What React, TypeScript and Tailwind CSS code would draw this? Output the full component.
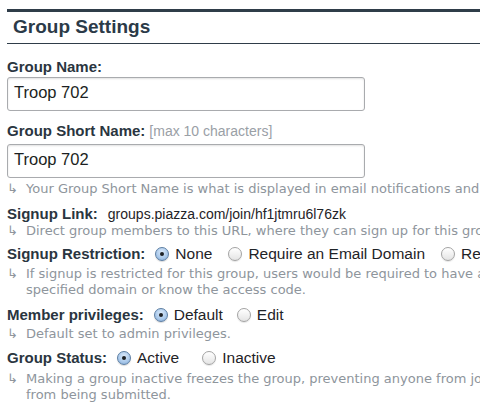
import React from 'react';

// Group settings panel — label / field / hint rows, cropped on the right like the original page.

const LABEL = 'font-["Liberation_Sans",Arial,sans-serif] font-bold text-[15px] leading-[18px] text-[#2a3540]';
const HINT = 'font-["DejaVu_Sans",Verdana,sans-serif] text-[13px] leading-[16px] text-[#8e959c] whitespace-nowrap';
const OPTION = 'font-["Liberation_Sans",Arial,sans-serif] text-[15.5px] leading-[18px] text-[#1f2327]';

function Radio({ checked }: { checked?: boolean }) {
  return checked ? (
    <span className="flex-none w-[14px] h-[14px] rounded-full border border-[#5c7ea3] bg-[radial-gradient(circle_at_50%_35%,#dbeafa_0%,#a9c8ea_60%,#7ea6d2_100%)] flex items-center justify-center shadow-[0_1px_1px_rgba(0,0,0,0.15)]">
      <span className="w-[4px] h-[4px] rounded-full bg-[#1d2125]" />
    </span>
  ) : (
    <span className="flex-none w-[14px] h-[14px] rounded-full border border-[#a3a3a3] bg-[linear-gradient(#ffffff,#e4e4e4)] shadow-[0_1px_1px_rgba(0,0,0,0.1)]" />
  );
}

function Option({ checked, label, className = '' }: { checked?: boolean; label: string; className?: string }) {
  return (
    <span className={'flex items-center gap-[6px] ' + className}>
      <Radio checked={checked} />
      <span className={OPTION}>{label}</span>
    </span>
  );
}

function Hint({ lines, className = '' }: { lines: string[]; className?: string }) {
  return (
    <div className={HINT + ' ' + className}>
      {lines.map((l, i) => (
        <div key={i} className={i === 0 ? 'flex' : 'pl-[19px]'}>
          {i === 0 ? <span className="inline-block flex-none w-[19px]">↳</span> : null}
          <span>{l}</span>
        </div>
      ))}
    </div>
  );
}

function TextBox({ value }: { value: string }) {
  return (
    <div className="w-[358px] h-[34px] rounded-[3px] border border-[#a9abae] bg-white shadow-[inset_0_1px_2px_rgba(0,0,0,0.12)] flex items-center pl-[6px] pb-[3px]">
      <span className='font-["Liberation_Sans",Arial,sans-serif] text-[16.5px] text-[#1c1f22]'>{value}</span>
    </div>
  );
}

export default function App() {
  return (
    <div className="w-[480px] h-[407px] overflow-hidden bg-white">
      <div className="w-[760px] pl-[7px] pt-[9px]">
        {/* heading */}
        <div className="h-[3px] bg-[#2f3d49]" />
        <div className="h-[32px] flex items-center pl-[6px] border-b border-[#2f3d49]">
          <span className='font-["Liberation_Sans",Arial,sans-serif] font-bold text-[19px] text-[#2b3a48]'>Group Settings</span>
        </div>

        <div className="pt-[14px] flex flex-col">
          <div className={LABEL + ' mb-[1px]'}>Group Name:</div>
          <TextBox value="Troop 702" />

          <div className="mt-[10px] mb-[2px] flex items-baseline gap-[4px]">
            <span className={LABEL}>Group Short Name:</span>
            <span className='font-["Liberation_Sans",Arial,sans-serif] text-[14px] text-[#9aa0a6]'>[max 10 characters]</span>
          </div>
          <TextBox value="Troop 702" />

          <Hint className="mt-[3px]" lines={['Your Group Short Name is what is displayed in email notifications and the group page header.']} />

          <div className="mt-[8px] flex items-center gap-[10px]">
            <span className={LABEL}>Signup Link:</span>
            <span className='font-["Liberation_Sans",Arial,sans-serif] text-[14px] leading-[18px] text-[#1f2327]'>groups.piazza.com/join/hf1jtmru6l76zk</span>
          </div>
          <Hint lines={['Direct group members to this URL, where they can sign up for this group.']} />

          <div className="mt-[6px] flex items-center">
            <span className={LABEL + ' mr-[10px]'}>Signup Restriction:</span>
            <Option checked label="None" className="mr-[16px]" />
            <Option label="Require an Email Domain" className="mr-[16px]" />
            <Option label="Require an Access Code" />
          </div>
          <Hint
            className="mt-[3px]"
            lines={[
              'If signup is restricted for this group, users would be required to have an email address from the',
              'specified domain or know the access code.',
            ]}
          />

          <div className="mt-[8px] flex items-center">
            <span className={LABEL + ' mr-[10px]'}>Member privileges:</span>
            <Option checked label="Default" className="mr-[14px]" />
            <Option label="Edit" />
          </div>
          <Hint className="mt-[2px]" lines={['Default set to admin privileges.']} />

          <div className="mt-[7px] flex items-center">
            <span className={LABEL + ' mr-[10px]'}>Group Status:</span>
            <Option checked label="Active" className="mr-[23px]" />
            <Option label="Inactive" />
          </div>
          <Hint
            className="mt-[4px]"
            lines={[
              'Making a group inactive freezes the group, preventing anyone from joining or posts',
              'from being submitted.',
            ]}
          />
        </div>
      </div>
    </div>
  );
}
